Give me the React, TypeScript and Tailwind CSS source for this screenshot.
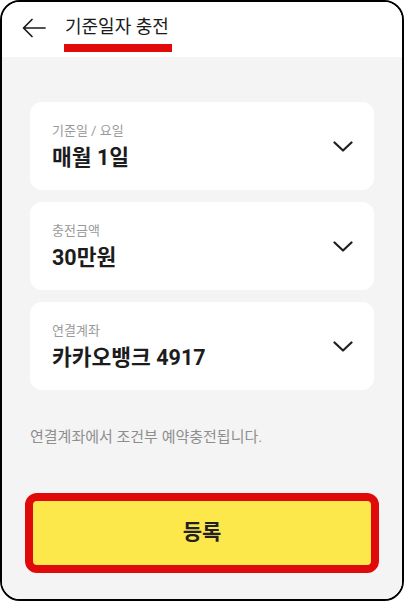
const FONT = "font-['Roboto','Noto_Sans_CJK_KR',sans-serif]";

type Field = { label: string; value: string };

const fields: Field[] = [
  { label: '기준일 / 요일', value: '매월 1일' },
  { label: '충전금액', value: '30만원' },
  { label: '연결계좌', value: '카카오뱅크 4917' },
];

function ChevronDown() {
  return (
    <svg width="20" height="12" viewBox="0 0 20 12" fill="none">
      <path d="M1.5 1.5 L10 9.5 L18.5 1.5" stroke="#1f1f1f" strokeWidth="2.2" strokeLinecap="round" strokeLinejoin="round" />
    </svg>
  );
}

function BackArrow() {
  return (
    <svg width="24" height="20" viewBox="0 0 24 20" fill="none">
      <path d="M23 10 H2 M10 1.5 L1.5 10 L10 18.5" stroke="#1a1a1a" strokeWidth="1.7" strokeLinecap="round" strokeLinejoin="round" />
    </svg>
  );
}

function SelectCard({ label, value }: Field) {
  return (
    <div className="flex h-[88px] items-center justify-between rounded-[12px] bg-white pl-[22px] pr-[21px]">
      <div className="flex flex-col pt-[2px]">
        <span className="text-[13px] leading-[17px] text-[#9a9a9a]">{label}</span>
        <span className="mt-[5px] text-[21.5px] font-bold leading-[28px] text-[#1c1c1c]">{value}</span>
      </div>
      <div className="mt-[2px]">
        <ChevronDown />
      </div>
    </div>
  );
}

export default function App() {
  return (
    <div className={`${FONT} h-[601px] w-[404px] bg-white`}>
      <div className="flex h-full w-full flex-col overflow-hidden rounded-[20px] border-2 border-black">
        <header className="flex h-[55px] shrink-0 items-start bg-white pl-[20px] pt-[14px]">
          <div className="mt-[2px]">
            <BackArrow />
          </div>
          <div className="ml-[19px] flex flex-col">
            <span className="text-[18px] leading-[22px] text-[#1a1a1a]">기준일자 충전</span>
            <span className="ml-[-1px] mt-[6px] h-[8px] w-[108px] bg-[#e00a0a]" />
          </div>
        </header>

        <main className="flex flex-1 flex-col bg-[#f4f4f5] px-[28px] pt-[45px]">
          <div className="flex flex-col gap-[12px]">
            {fields.map((f) => (
              <SelectCard key={f.label} {...f} />
            ))}
          </div>

          <p className="mt-[36px] text-[15px] leading-[22px] text-[#8e8e8e]">
            연결계좌에서 조건부 예약충전됩니다.
          </p>

          <button className="mx-[-5px] mt-[45px] flex h-[80px] items-center justify-center rounded-[12px] border-[8px] border-[#e00a0a] bg-[#fde84c]">
            <span className="text-[21px] font-bold text-[#222]">등록</span>
          </button>
        </main>
      </div>
    </div>
  );
}
